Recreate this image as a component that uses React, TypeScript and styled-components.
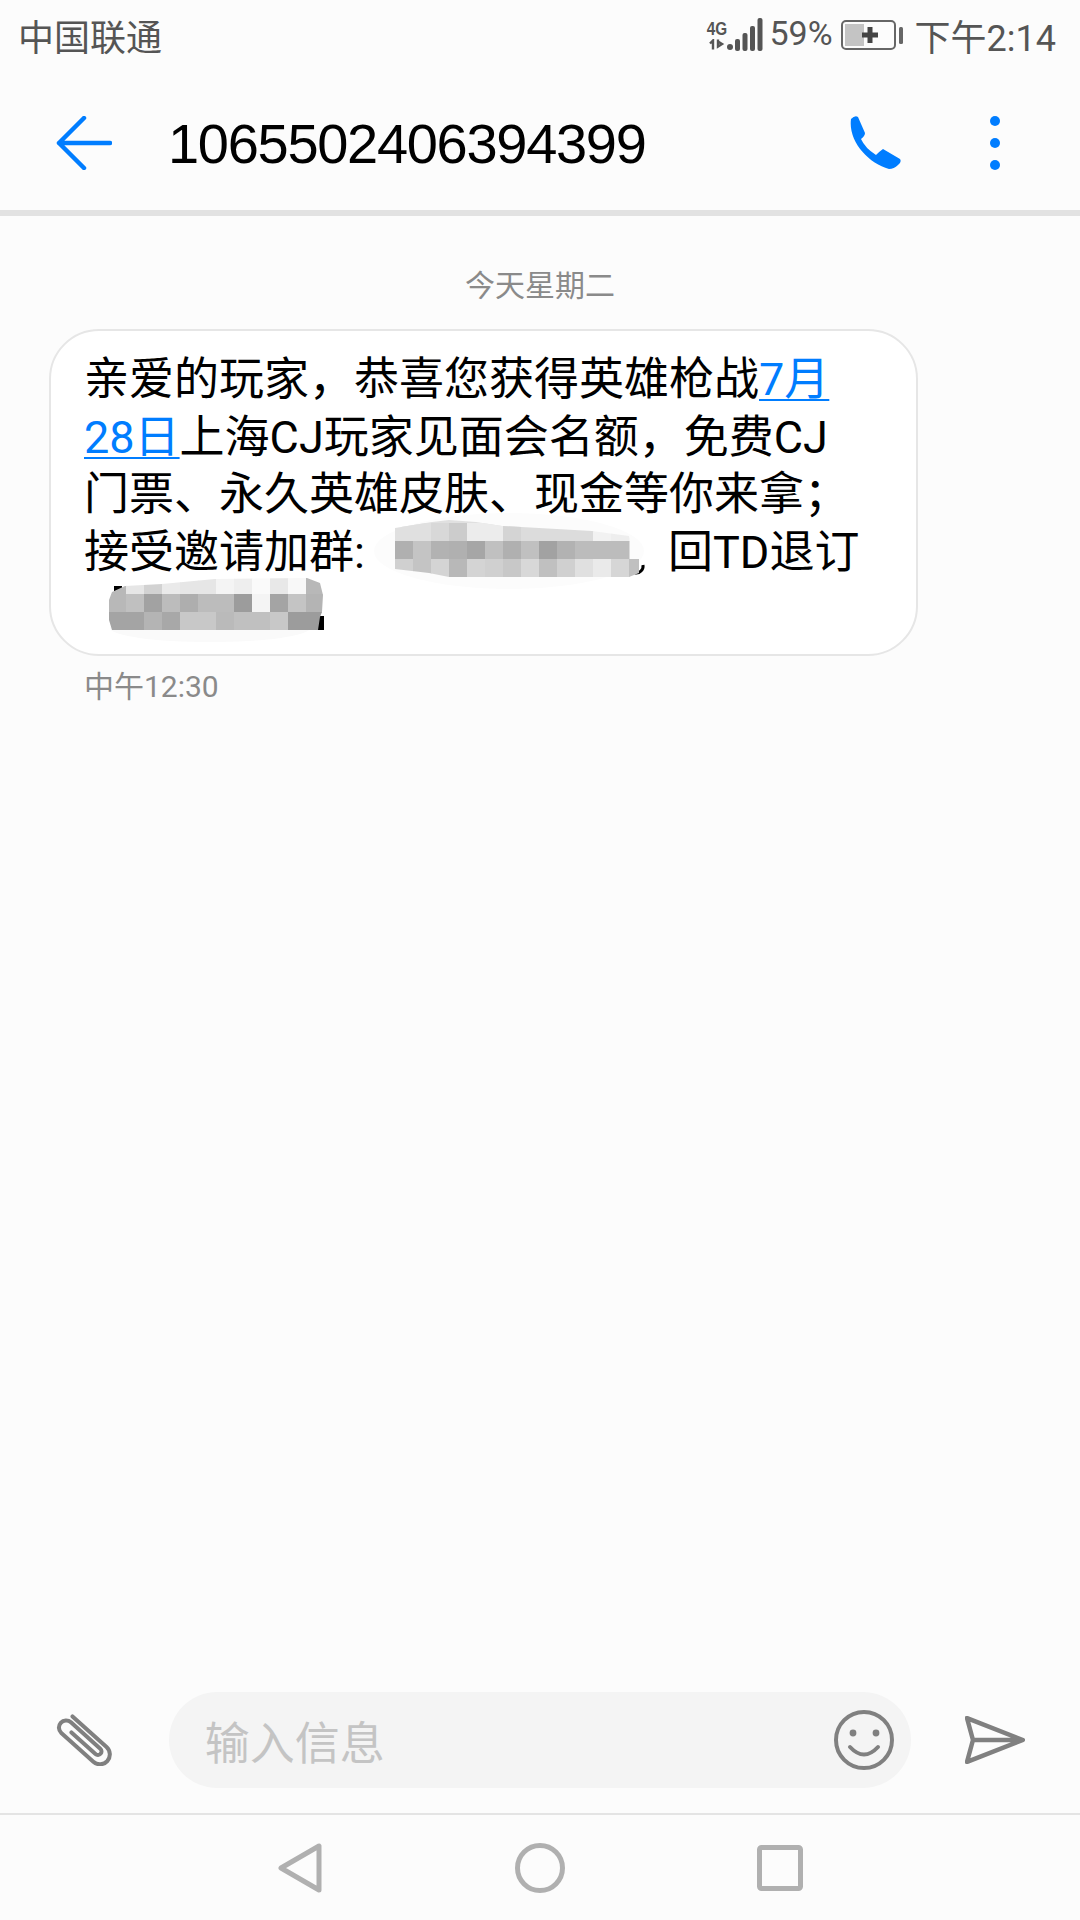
import React from "react";
import styled, { createGlobalStyle } from "styled-components";

const GlobalStyle = createGlobalStyle`
    html, body {
        margin: 0;
        padding: 0;
        background: #fcfcfc;
    }
`;

const Screen = styled.div`
    display: flex;
    flex-direction: column;
    width: 1080px;
    height: 1920px;
    overflow: hidden;
    background: #fcfcfc;
    font-family: Roboto, "Noto Sans CJK SC", sans-serif;
`;

const StatusBar = styled.div`
    display: flex;
    align-items: center;
    justify-content: space-between;
    box-sizing: border-box;
    height: 72px;
    padding: 0 24px 3px 18px;
    color: #555;
    flex-shrink: 0;
`;

const Carrier = styled.span`
    font-size: 36px;
`;

const StatusRight = styled.div`
    display: flex;
    align-items: center;
`;

const Percent = styled.span`
    font-size: 34px;
    margin: -3px 8px 0 6px;
`;

const Clock = styled.span`
    font-size: 36px;
    margin-left: 12px;
`;

const Network = styled.div`
    display: flex;
    flex-direction: column;
    align-items: center;
    width: 18px;
    margin-right: 1px;
`;

const NetworkLabel = styled.span`
    font-family: "Liberation Sans", sans-serif;
    font-size: 18px;
    line-height: 20px;
    font-weight: bold;
    transform: scaleX(0.85);
`;

const Header = styled.header`
    display: flex;
    align-items: center;
    box-sizing: content-box;
    height: 135px;
    padding: 3px 0 0 56px;
    flex-shrink: 0;
    border-bottom: 6px solid #e2e2e2;
`;

const Title = styled.span`
    font-family: "Liberation Sans", sans-serif;
    font-size: 56px;
    letter-spacing: -1.3px;
    color: #000;
    margin: 2px 0 0 56px;
    flex: 1;
`;

const MoreDots = styled.div`
    display: flex;
    flex-direction: column;
    gap: 12px;
    margin: 0 80px 0 88px;
`;

const Dot = styled.span`
    display: block;
    width: 10px;
    height: 10px;
    border-radius: 50%;
    background: #007dff;
`;

const Thread = styled.main`
    flex: 1;
    padding: 0 49px;
`;

const DateLabel = styled.div`
    text-align: center;
    font-size: 30px;
    line-height: 40px;
    color: #8a8a8a;
    margin-top: 50px;
`;

const Bubble = styled.div`
    box-sizing: border-box;
    width: 869px;
    height: 327px;
    margin-top: 23px;
    padding: 20px 20px 0 33px;
    background: #fff;
    border: 2px solid #e6e6e6;
    border-radius: 50px;
    font-size: 45px;
    line-height: 57.6px;
    color: #000;
    white-space: nowrap;
`;

const LinkText = styled.span`
    color: #007dff;
    text-decoration: underline;
    text-decoration-thickness: 2px;
    text-underline-offset: 4px;
`;

const Colon = styled.span`
    display: inline-block;
    width: 21px;
`;

const MosaicSvg = styled.svg`
    display: inline-block;
    vertical-align: top;
    overflow: visible;
`;

const MessageTime = styled.div`
    font-size: 30px;
    line-height: 40px;
    color: #8a8a8a;
    margin: 11px 0 0 35px;
`;

const Composer = styled.div`
    display: flex;
    align-items: center;
    box-sizing: border-box;
    height: 135px;
    padding: 0 55px 13px 56px;
    flex-shrink: 0;
    border-bottom: 2px solid #e4e4e4;
`;

const InputPill = styled.div`
    display: flex;
    align-items: center;
    justify-content: space-between;
    box-sizing: border-box;
    width: 744px;
    height: 96px;
    margin: 0 54px 0 57px;
    padding: 0 17px 0 36px;
    border-radius: 48px;
    background: #f4f4f4;
`;

const Placeholder = styled.span`
    font-size: 45px;
    color: #c4c4c4;
`;

const NavBar = styled.nav`
    display: flex;
    align-items: center;
    justify-content: center;
    height: 105px;
    flex-shrink: 0;
`;

const NavSlot = styled.div`
    display: flex;
    justify-content: center;
    width: 240px;
`;

const topMosaic = {
    x: 396,
    y: 522,
    rows: [
        ["e0", "e0", "d8", "cc", "ec", "ec", "d4", "dc", "dc", "dc", "dc", "f2", "ee"],
        ["b0", "c4", "b2", "b0", "a6", "c0", "b0", "c0", "a2", "b2", "bc", "bc", "bc"],
        ["d0", "c4", "d4", "b8", "d4", "d0", "c8", "d8", "c0", "d0", "e0", "ea", "d6"],
    ],
};

const bottomMosaic = {
    x: 108,
    y: 576,
    rows: [
        ["b8", "e6", "d2", "ea", "e6", "e6", "f4", "ee", "fa", "e8", "f8", "b8"],
        ["b8", "c0", "a2", "bc", "ae", "bc", "bc", "9c", "f4", "a4", "c4", "b4"],
        ["a4", "a4", "b4", "a8", "c8", "c8", "ba", "c0", "c0", "c8", "9c", "9c"],
    ],
};

const MosaicCells: React.FC<{ data: typeof topMosaic }> = ({ data }) => (
    <>
        {data.rows.map((row, r) =>
            row.map((gray, c) => (
                <rect
                    key={`${r}-${c}`}
                    x={data.x + c * 18}
                    y={data.y + r * 18}
                    width="18.5"
                    height="18.5"
                    fill={`#${gray}${gray}${gray}`}
                />
            ))
        )}
    </>
);

// the two censored parts of the message, drawn in page coordinates
const TopMosaic = () => (
    <MosaicSvg width="293" height="57" viewBox="376 523 293 57">
        <defs>
            <clipPath id="topClip">
                <path d="M396 527L433 521L450 519L477 521L503 525L593 530L630 535L640 558L640 572L630 576L450 576L430 572L396 568Z" />
            </clipPath>
        </defs>
        <ellipse cx="510" cy="550" rx="135" ry="38" fill="#fcfcfc" />
        <path d="M634 568a7 7 0 0 0 8-8" stroke="#000" strokeWidth="3" fill="none" transform="translate(2 4)" />
        <g clipPath="url(#topClip)">
            <rect x="396" y="516" width="234" height="10" fill="#e0e0e0" />
            <MosaicCells data={topMosaic} />
            <rect x="630" y="558" width="12" height="18" fill="#c0c0c0" />
        </g>
    </MosaicSvg>
);

const BottomMosaic = () => (
    <MosaicSvg width="250" height="57" viewBox="84 581 250 57">
        <defs>
            <clipPath id="bottomClip">
                <path d="M109 600L112 592L125 586L162 584L215 579L307 578L320 583L323 595L322 612L320 617L318 630L112 630L109 620Z" />
            </clipPath>
        </defs>
        <ellipse cx="210" cy="628" rx="100" ry="14" fill="#fafafa" />
        <rect x="114" y="586" width="8" height="6" fill="#000" />
        <rect x="318" y="616" width="6" height="14" fill="#000" />
        <g clipPath="url(#bottomClip)">
            <MosaicCells data={bottomMosaic} />
        </g>
    </MosaicSvg>
);

const SignalIcon = () => (
    <svg width="36" height="34" viewBox="0 0 36 34">
        <circle cx="3" cy="29" r="3" fill="#555" />
        <rect x="8" y="21" width="5" height="12" rx="2" fill="#555" />
        <rect x="15.5" y="15" width="5" height="18" rx="2" fill="#555" />
        <rect x="23" y="8" width="5" height="25" rx="2" fill="#555" />
        <rect x="30.5" y="0" width="5" height="33" rx="2" fill="#555" />
    </svg>
);

const TransferIcon = () => (
    <svg width="16" height="11" viewBox="0 0 16 10">
        <path d="M1 4L4 1V10M9 0V7L13 4.5L9 2" stroke="#555" strokeWidth="2.4" fill="none" />
    </svg>
);

const BatteryIcon = () => (
    <svg width="62" height="30" viewBox="0 0 62 30">
        <rect x="1" y="1" width="53" height="28" rx="4" fill="none" stroke="#666" strokeWidth="2" />
        <rect x="4" y="4" width="19" height="22" fill="#c4c4c4" />
        <rect x="58" y="7" width="4" height="17" rx="1.5" fill="#666" />
        <path d="M21 15H37M29 7V23" stroke="#444" strokeWidth="5" />
    </svg>
);

const BackIcon = () => (
    <svg width="56" height="54" viewBox="0 0 56 54">
        <path
            d="M28 2L3 27L28 52M3 27H54"
            fill="none"
            stroke="#007dff"
            strokeWidth="4.5"
            strokeLinecap="round"
            strokeLinejoin="round"
        />
    </svg>
);

const PhoneIcon = () => (
    <svg width="54" height="54" viewBox="0 0 54 54">
        <path
            d="M3 3Q7 -1 10 1L17 17Q17 20 13 23Q17 32 28 39Q32 35 35 33L52 43Q54 46 50 49Q46 53 41 53C20 47 0 25 3 3Z"
            fill="#007dff"
        />
    </svg>
);

const ClipIcon = () => (
    <svg width="56" height="52" viewBox="-28 -26 56 52">
        <g transform="rotate(42) scale(0.9)">
            <path
                d="M-27 -11L24 -11A11 11 0 0 1 24 11L-24 11A8 8 0 0 1 -24 -5L20 -5A4 4 0 0 1 20 3L-16 3"
                fill="none"
                stroke="#808080"
                strokeWidth="4.5"
                strokeLinecap="round"
            />
        </g>
    </svg>
);

const SmileIcon = () => (
    <svg width="60" height="60" viewBox="0 0 60 60">
        <circle cx="30" cy="30" r="28" fill="none" stroke="#808080" strokeWidth="4" />
        <circle cx="19" cy="23" r="3.4" fill="#808080" />
        <circle cx="42" cy="23" r="3.4" fill="#808080" />
        <path d="M16 37Q30 52 44 37" fill="none" stroke="#808080" strokeWidth="4" strokeLinecap="round" />
    </svg>
);

const SendIcon = () => (
    <svg width="60" height="48" viewBox="0 0 60 48">
        <path
            d="M2 2L58 24L2 46L8 24ZM8 24H58"
            fill="none"
            stroke="#808080"
            strokeWidth="4.5"
            strokeLinejoin="round"
        />
    </svg>
);

const NavBack = () => (
    <svg width="44" height="50" viewBox="0 0 44 50">
        <path d="M41 3V47L3 25Z" fill="none" stroke="#b0b0b0" strokeWidth="5" strokeLinejoin="round" />
    </svg>
);

const NavHome = () => (
    <svg width="50" height="50" viewBox="0 0 50 50">
        <circle cx="25" cy="25" r="22.5" fill="none" stroke="#b0b0b0" strokeWidth="5" />
    </svg>
);

const NavRecent = () => (
    <svg width="46" height="46" viewBox="0 0 46 46">
        <rect x="2.5" y="2.5" width="41" height="41" rx="2" fill="none" stroke="#b0b0b0" strokeWidth="5" />
    </svg>
);

const App: React.FC = () => {
    return (
        <Screen>
            <GlobalStyle />
            <StatusBar>
                <Carrier>中国联通</Carrier>
                <StatusRight>
                    <Network>
                        <NetworkLabel>4G</NetworkLabel>
                        <TransferIcon />
                    </Network>
                    <SignalIcon />
                    <Percent>59%</Percent>
                    <BatteryIcon />
                    <Clock>下午2:14</Clock>
                </StatusRight>
            </StatusBar>
            <Header>
                <BackIcon />
                <Title>1065502406394399</Title>
                <PhoneIcon />
                <MoreDots>
                    <Dot />
                    <Dot />
                    <Dot />
                </MoreDots>
            </Header>
            <Thread>
                <DateLabel>今天星期二</DateLabel>
                <Bubble>
                    亲爱的玩家，恭喜您获得英雄枪战<LinkText>7月</LinkText>
                    <br />
                    <LinkText>28日</LinkText>上海CJ玩家见面会名额，免费CJ
                    <br />
                    门票、永久英雄皮肤、现金等你来拿；
                    <br />
                    接受邀请加群<Colon>:</Colon>
                    <TopMosaic />回TD退订
                    <br />
                    <BottomMosaic />
                </Bubble>
                <MessageTime>中午12:30</MessageTime>
            </Thread>
            <Composer>
                <ClipIcon />
                <InputPill>
                    <Placeholder>输入信息</Placeholder>
                    <SmileIcon />
                </InputPill>
                <SendIcon />
            </Composer>
            <NavBar>
                <NavSlot>
                    <NavBack />
                </NavSlot>
                <NavSlot>
                    <NavHome />
                </NavSlot>
                <NavSlot>
                    <NavRecent />
                </NavSlot>
            </NavBar>
        </Screen>
    );
};

export default App;
